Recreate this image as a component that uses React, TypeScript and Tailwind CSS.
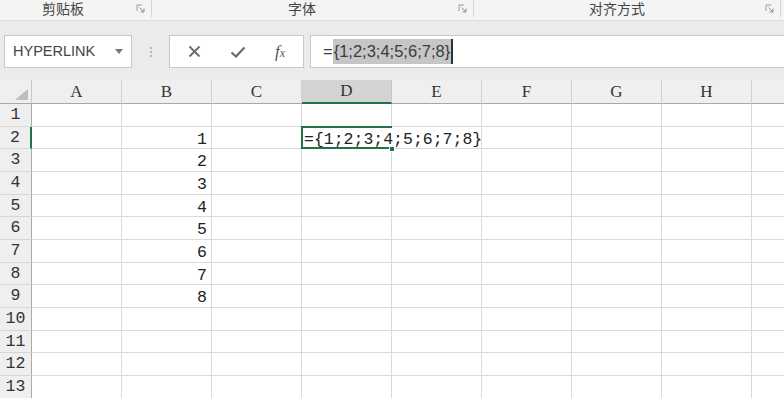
import React from 'react';

const cols = ['A', 'B', 'C', 'D', 'E', 'F', 'G', 'H', 'I'];
// row heights alternate so 13 rows fill 104..399 like the sheet
const rowHeights = [23, 22, 23, 23, 22, 23, 23, 22, 23, 23, 22, 23, 23];

function Launcher() {
  return (
    <svg width="9" height="9" viewBox="0 0 9 9" className="shrink-0">
      <path d="M1 1h5M1 1v6" stroke="#9a9a9a" strokeWidth="1" fill="none" />
      <path d="M3.5 3.5l4 4M8 4.5V8H4.5" stroke="#8a8a8a" strokeWidth="1" fill="none" />
    </svg>
  );
}

function RibbonLabels() {
  return (
    <div className="h-[21px] shrink-0 bg-[#f4f4f4] border-b border-[#dcdcdc] flex items-start text-[14px] text-[#444]">
      {/* 剪贴板 */}
      <div className="w-[152px] h-[17px] shrink-0 flex items-center border-r border-[#d4d4d4]">
        <div className="w-[126px] text-center leading-[18px]">剪贴板</div>
        <div className="ml-[10px]">
          <Launcher />
        </div>
      </div>
      {/* 字体 */}
      <div className="w-[322px] h-[17px] shrink-0 flex items-center border-r border-[#d4d4d4]">
        <div className="w-[300px] text-center leading-[18px]">字体</div>
        <div className="ml-[6px]">
          <Launcher />
        </div>
      </div>
      {/* 对齐方式 */}
      <div className="w-[307px] h-[17px] shrink-0 flex items-center border-r border-[#d4d4d4]">
        <div className="w-[286px] text-center leading-[18px]">对齐方式</div>
        <div className="ml-[5px]">
          <Launcher />
        </div>
      </div>
    </div>
  );
}

function FormulaBar() {
  return (
    <div className="mt-[14px] h-[33px] shrink-0 flex items-stretch pl-[4px]">
      {/* name box */}
      <div className="w-[128px] shrink-0 bg-white border border-[#c8c8c8] flex items-center pl-[8px] pr-[8px]">
        <span className="text-[14.5px] text-[#454545] flex-1">HYPERLINK</span>
        <svg width="8" height="5" viewBox="0 0 8 5">
          <path d="M0 0h8L4 5z" fill="#777" />
        </svg>
      </div>
      {/* grip */}
      <div className="w-[37px] shrink-0 flex flex-col items-center justify-center gap-[2px]">
        <div className="w-[2px] h-[2px] bg-[#b4b4b4]" />
        <div className="w-[2px] h-[2px] bg-[#b4b4b4]" />
        <div className="w-[2px] h-[2px] bg-[#b4b4b4]" />
      </div>
      {/* cancel / enter / fx */}
      <div className="w-[135px] shrink-0 bg-white border border-[#c8c8c8] flex items-center">
        <div className="w-[46px] flex justify-center pl-[2px]">
          <svg width="13" height="13" viewBox="0 0 13 13">
            <path d="M1.5 1.5l10 10M11.5 1.5l-10 10" stroke="#6a6a6a" strokeWidth="1.8" />
          </svg>
        </div>
        <div className="w-[44px] flex justify-center">
          <svg width="16" height="12" viewBox="0 0 16 12">
            <path d="M1.5 6.5l4.5 4L14.5 1.5" stroke="#6a6a6a" strokeWidth="2.2" fill="none" />
          </svg>
        </div>
        <div className="w-[40px] flex justify-center">
          <span className="font-['Liberation_Serif',serif] italic text-[#555] text-[17px] leading-none">
            f<span className="text-[12px]">x</span>
          </span>
        </div>
      </div>
      {/* formula input */}
      <div className="ml-[6px] flex-1 bg-white border border-[#c8c8c8] border-r-0 flex items-center pl-[12px] text-[16.5px] text-[#3c3c3c]">
        <span>=</span>
        <span className="bg-[#c6c6c6] leading-[25px] pl-[1px] pr-[1px]">{'{1;2;3;4;5;6;7;8}'}</span>
        <span className="w-[2px] h-[25px] bg-[#333]" />
      </div>
    </div>
  );
}

function HeaderRow() {
  return (
    <div className="mt-[12px] h-[24px] shrink-0 flex font-['Liberation_Serif',serif] text-[17px] text-[#333]">
      <div className="w-[32px] shrink-0 relative bg-[#efefef] border-r border-[#c8c8c8] border-b border-b-[#a8a8a8]">
        <svg width="13" height="11" viewBox="0 0 13 11" className="absolute right-[3px] bottom-[3px]">
          <path d="M13 0V11H0z" fill="#bdbdbd" />
        </svg>
      </div>
      {cols.map((c) =>
        c === 'D' ? (
          <div
            key={c}
            className="w-[90px] shrink-0 flex items-center justify-center bg-[#d4d4d4] border-r border-[#c8c8c8] border-b-2 border-b-[#217346]"
          >
            {c}
          </div>
        ) : (
          <div
            key={c}
            className="w-[90px] shrink-0 flex items-center justify-center bg-[#efefef] border-r border-[#d0d0d0] border-b border-b-[#a8a8a8]"
          >
            {c === 'I' ? '' : c}
          </div>
        )
      )}
    </div>
  );
}

function Row({ n, h }: { n: number; h: number }) {
  return (
    <div className={`flex shrink-0 ${h === 23 ? 'h-[23px]' : 'h-[22px]'}`}>
      <div
        className={`w-[32px] shrink-0 flex items-center justify-center pt-[1px] bg-[#efefef] border-b border-[#d6d6d6] text-[#333] ${
          n === 2 ? 'border-r-2 border-r-[#217346]' : 'border-r border-r-[#ababab]'
        }`}
      >
        {n}
      </div>
      {cols.map((c) => {
        if (c === 'B' && n >= 2 && n <= 9) {
          return (
            <div
              key={c}
              className="w-[90px] shrink-0 bg-white border-r border-b border-[#dadada] flex items-center justify-end pr-[4px] pt-[5px] text-[#222]"
            >
              {n - 1}
            </div>
          );
        }
        if (c === 'D' && n === 2) {
          return (
            <div
              key={c}
              className="w-[90px] shrink-0 relative bg-white border-b border-[#dadada] border-r border-r-white flex items-center pl-[2px] pt-[5px] text-[#222] whitespace-nowrap"
            >
              <span className="relative z-10">{'={1;2;3;4;5;6;7;8}'}</span>
              {/* active cell frame */}
              <div className="absolute -left-px -top-px -right-px -bottom-px border-2 border-r-0 border-[#217346] z-20" />
              <div className="absolute -right-[4px] -bottom-[4px] w-[6px] h-[6px] bg-[#217346] border border-white z-20" />
            </div>
          );
        }
        return <div key={c} className="w-[90px] shrink-0 bg-white border-r border-b border-[#dadada]" />;
      })}
    </div>
  );
}

export default function App() {
  return (
    <div className="w-[784px] h-[398px] overflow-hidden bg-[#ebebeb] flex flex-col font-['Liberation_Sans','Noto_Sans_CJK_SC',sans-serif]">
      <RibbonLabels />
      <FormulaBar />
      <HeaderRow />
      <div className="flex flex-col font-['Liberation_Mono',monospace] text-[16.5px]">
        {rowHeights.map((h, i) => (
          <Row key={i} n={i + 1} h={h} />
        ))}
      </div>
    </div>
  );
}
